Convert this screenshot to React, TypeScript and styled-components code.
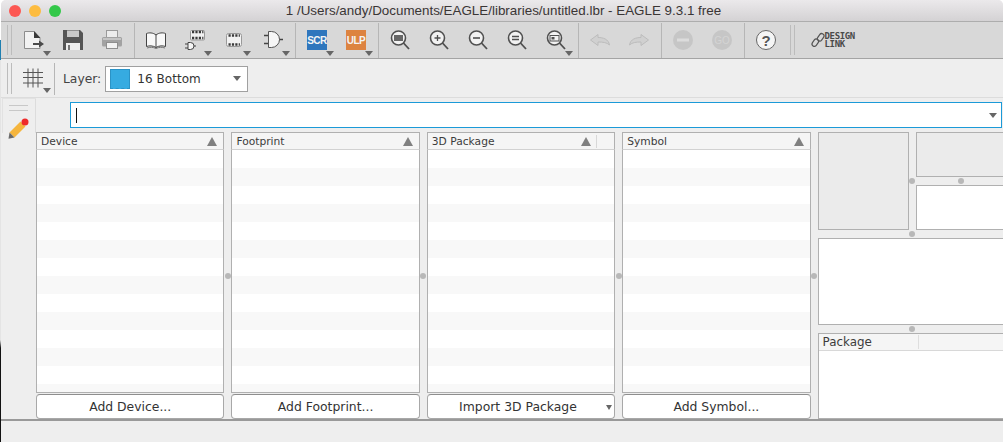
import React from 'react';
import styled, { createGlobalStyle } from 'styled-components';

const UI_FONT = '"DejaVu Sans", "Liberation Sans", sans-serif';

const GlobalStyle = createGlobalStyle`
  html, body {
    margin: 0;
    padding: 0;
    width: 1003px;
    height: 442px;
    overflow: hidden;
    background: linear-gradient(#ffffff 0 40px, #1f7fb0 40px 60px, #e4e4e4 60px 340px, #111111 348px);
  }
  * { box-sizing: border-box; }
`;

const Window = styled.div`
  margin-left: 1px;
  width: 1002px;
  height: 442px;
  display: flex;
  flex-direction: column;
  background: #eeeeee;
  overflow: hidden;
  border-radius: 5px 5px 0 0;
  font-family: ${UI_FONT};
  color: #333;
`;

const TitleBar = styled.div`
  flex: 0 0 22px;
  display: flex;
  align-items: center;
  background: linear-gradient(#ebe9eb, #d4d2d4);
  border-bottom: 1px solid #adadad;
`;

const Lights = styled.div`
  flex: 0 0 69px;
  display: flex;
  gap: 8px;
  padding-left: 8px;
`;

const Light = styled.span<{ $color: string }>`
  width: 12px;
  height: 12px;
  border-radius: 50%;
  background: ${props => props.$color};
`;

const Title = styled.div`
  flex: 1;
  text-align: center;
  font-family: "Liberation Sans", Arial, sans-serif;
  font-size: 13.4px;
  color: #3a3535;
  padding-right: 66px;
  white-space: nowrap;
`;

const MainToolbar = styled.div`
  flex: 0 0 37px;
  display: flex;
  align-items: stretch;
  padding-left: 6px;
  background: #d8d8d8;
  border-bottom: 1px solid #a4a4a4;
`;

const LayerToolbar = styled.div`
  flex: 0 0 39px;
  display: flex;
  align-items: stretch;
  padding: 1px 0 0 6px;
  background: #eeeeee;
  border-bottom: 1px solid #dcdcdc;
`;

const Grip = styled.div<{ $inset?: number }>`
  flex: 0 0 5px;
  margin: 3px 2.5px 3px ${props => props.$inset ?? 0}px;
  border-left: 1px solid #bcbcbc;
  border-right: 1px solid #bcbcbc;
`;

const Separator = styled.div<{ $tight?: boolean }>`
  flex: 0 0 1px;
  margin: ${props => (props.$tight ? '3px 1.5px 2px 0.5px' : '1px 1.5px 0 2.5px')};
  background: #b6b6b6;
`;

const ToolButton = styled.div<{ $menu?: boolean; $caretBottom?: number }>`
  position: relative;
  flex: 0 0 39px;
  display: flex;
  align-items: center;
  justify-content: center;
  &::after {
    content: ${props => (props.$menu ? '""' : 'none')};
    position: absolute;
    right: 3px;
    bottom: ${props => props.$caretBottom ?? 2}px;
    border-left: 4px solid transparent;
    border-right: 4px solid transparent;
    border-top: 5px solid #666;
  }
`;

const Icon = styled.svg`
  display: block;
  width: 24px;
  height: 24px;
  flex: none;
`;

const ScriptBadge = styled.span<{ $color: string }>`
  width: 20px;
  height: 20px;
  display: flex;
  align-items: center;
  justify-content: center;
  background: ${props => props.$color};
  color: #f4f4f4;
  font-family: "Liberation Sans", Arial, sans-serif;
  font-size: 10px;
  font-weight: 700;
  letter-spacing: -0.5px;
`;

const DesignLink = styled.div`
  display: flex;
  align-items: center;
  padding-left: 12px;
`;

const DesignText = styled.span`
  margin-left: -1px;
  font-family: "DejaVu Sans Mono", monospace;
  font-size: 9px;
  font-weight: 700;
  line-height: 8px;
  letter-spacing: -0.35px;
  color: #4a4a4a;
  white-space: pre-line;
`;

const LayerLabel = styled.span`
  align-self: center;
  margin-left: 6.5px;
  font-size: 12.3px;
  color: #444;
`;

const LayerSelect = styled.div`
  align-self: center;
  width: 143px;
  height: 26px;
  margin-left: 4px;
  display: flex;
  align-items: center;
  padding: 0 6px 0 4px;
  background: #fff;
  border: 1px solid #a0a0a0;
`;

const Swatch = styled.span`
  flex: 0 0 20px;
  height: 20px;
  background: #36abe1;
  border: 1px solid #2b93c6;
  border-bottom-style: dashed;
`;

const LayerName = styled.span`
  flex: 1;
  padding-left: 7px;
  font-size: 12px;
  letter-spacing: 0.05px;
`;

const DownCaret = styled.span`
  flex: none;
  border-left: 4px solid transparent;
  border-right: 4px solid transparent;
  border-top: 5px solid #666;
`;

const Body = styled.div`
  flex: 0 0 323px;
  display: flex;
  border-bottom: 2px solid #999;
`;

const SidePanel = styled.div`
  flex: 0 0 34px;
  margin-left: 1px;
  padding: 6px 0 0 7px;
  border-top: 1px solid #e2e2e2;
  background:
    linear-gradient(#dcdcdc, #dcdcdc) right top / 1px 34px no-repeat,
    linear-gradient(#e2e2e2, #e2e2e2) left top / 1px 34px no-repeat;
`;

const SideGrip = styled.div`
  width: 19px;
  height: 6px;
  margin-bottom: 6px;
  border-top: 1px solid #c8c8c8;
  border-bottom: 1px solid #c8c8c8;
`;

const PencilIcon = styled(Icon)`
  margin-left: -3px;
`;

const Content = styled.div`
  flex: 1;
  min-width: 0;
  display: flex;
  flex-direction: column;
  overflow: hidden;
`;

const CommandRow = styled.div`
  flex: 0 0 34px;
  padding: 4px 1px 4px 34px;
`;

const CommandInput = styled.div`
  height: 26px;
  display: flex;
  align-items: center;
  justify-content: space-between;
  padding: 0 4px 0 5px;
  background: #fff;
  border: 1px solid #1b9ad8;
`;

const TextCursor = styled.span`
  width: 1px;
  height: 15px;
  background: #111;
`;

const Panes = styled.div`
  flex: 1;
  display: flex;
  min-height: 0;
`;

const Column = styled.div`
  flex: 0 0 188.4px;
  display: flex;
  flex-direction: column;
`;

const HeaderBar = styled.div`
  flex: 0 0 18px;
  display: flex;
  align-items: center;
  padding-left: 4px;
  background: #f5f5f5;
  border: 1px solid #b0b0b0;
  border-bottom: 1px solid #d2d2d2;
  font-size: 10.7px;
  color: #3c3c3c;
`;

const HeaderLabel = styled.span`
  flex: 1;
`;

const SortArrow = styled.span`
  flex: none;
  margin-right: 6px;
  border-left: 5px solid transparent;
  border-right: 5px solid transparent;
  border-bottom: 9px solid #808080;
`;

const ExtraSection = styled.span`
  flex: 0 0 18px;
  height: 13px;
  margin-left: -1px;
  border-left: 1px solid #d8d8d8;
`;

const StripedList = styled.div`
  flex: 1;
  border: 1px solid #b0b0b0;
  border-top: 0;
  background: repeating-linear-gradient(#fff 0 18px, #f8f8f8 18px 36px);
`;

const ActionButton = styled.div<{ $menu?: boolean }>`
  position: relative;
  flex: 0 0 25px;
  margin-top: 1px;
  display: flex;
  align-items: center;
  justify-content: center;
  padding-right: ${props => (props.$menu ? '6px' : '0')};
  background: #fff;
  border: 1px solid #a8a8a8;
  border-top-color: #8e8e8e;
  border-radius: 4px;
  font-size: 12.4px;
  color: #333;
  &::after {
    content: ${props => (props.$menu ? '""' : 'none')};
    position: absolute;
    right: 2px;
    top: 10px;
    border-left: 3.5px solid transparent;
    border-right: 3.5px solid transparent;
    border-top: 5px solid #666;
  }
`;

const VSplit = styled.div`
  flex: 0 0 7px;
  display: flex;
  align-items: center;
  justify-content: center;
`;

const HSplit = styled.div`
  flex: 0 0 8px;
  display: flex;
  align-items: center;
  justify-content: center;
`;

const Dot = styled.span`
  flex: none;
  width: 6px;
  height: 6px;
  border-radius: 50%;
  background: #b8b8b8;
`;

const Previews = styled.div`
  flex: 0 0 188px;
  display: flex;
  flex-direction: column;
`;

const PreviewTop = styled.div`
  flex: 0 0 98px;
  display: flex;
`;

const PreviewStack = styled.div`
  flex: 1;
  display: flex;
  flex-direction: column;
`;

const PreviewBox = styled.div<{ $blank?: boolean; $grow?: boolean; $width?: number; $height?: number }>`
  flex: ${props =>
    props.$width ? `0 0 ${props.$width}px` : props.$height ? `0 0 ${props.$height}px` : props.$grow ? '1' : 'none'};
  background: ${props => (props.$blank ? '#ffffff' : '#ebebeb')};
  border: 1px solid #b0b0b0;
`;

const PackagePane = styled.div`
  flex: 1;
  min-height: 0;
  display: flex;
  flex-direction: column;
  background: #fff;
  border: 1px solid #b0b0b0;
`;

const PackageHeader = styled.div`
  flex: 0 0 17px;
  display: flex;
  align-items: center;
  background: #f5f5f5;
  border-bottom: 1px solid #d8d8d8;
`;

const PackageLabel = styled.span`
  flex: 0 0 100px;
  padding-left: 4px;
  font-size: 11.9px;
  border-right: 1px solid #dedede;
  color: #3c3c3c;
`;

const NewIcon = () => (
  <Icon viewBox="0 0 24 24">
    <path d="M2.5 3.5H12L18 10V20.5H2.5Z" fill="#f2f2f2" stroke="#8c8c8c" />
    <path d="M12 3L18.5 10H12Z" fill="#3a3a3a" />
    <path d="M11 15H17V12.5L22 16L17 19.5V17H11Z" fill="#4a4a4a" />
  </Icon>
);

const SaveIcon = () => (
  <Icon viewBox="0 0 24 24">
    <path d="M2 2H19L22 5V22H2Z" fill="#555" />
    <rect x="6" y="2.5" width="12" height="6.5" fill="#c8c8c8" />
    <rect x="5" y="15" width="14" height="7" fill="#eeeeee" />
    <rect x="7" y="17" width="2" height="5" fill="#777" />
  </Icon>
);

const PrintIcon = () => (
  <Icon viewBox="0 0 24 24">
    <rect x="6.5" y="2.5" width="11" height="7" fill="#ececec" stroke="#9a9a9a" />
    <rect x="2" y="9" width="20" height="9.5" rx="1.5" fill="#a2a2a2" />
    <rect x="3" y="10" width="18" height="2" fill="#c4c4c4" />
    <rect x="6.5" y="14.5" width="11" height="6" fill="#f2f2f2" stroke="#8e8e8e" />
  </Icon>
);

const BookIcon = () => (
  <Icon viewBox="0 0 24 24">
    <path d="M12 7C9 4.5 5 4.5 2.5 5.5V18.5C5 17.5 9 17.5 12 19.5C15 17.5 19 17.5 21.5 18.5V5.5C19 4.5 15 4.5 12 7Z" fill="#f8f8f8" stroke="#444" />
    <path d="M12 7V20" stroke="#444" fill="none" />
    <path d="M3 20C6 19 9 19 12 20.5C15 19 18 19 21 20" stroke="#777" fill="none" />
  </Icon>
);

const Pads = ({ y, x = 9, n = 4 }: { y: number; x?: number; n?: number }) => (
  <path d={`M${x} ${y}h${n * 3 - 0.6}`} stroke="#3a3a3a" strokeWidth="2.4" strokeDasharray="2.2 1.2" fill="none" />
);

const DeviceIcon = () => (
  <Icon viewBox="0 0 24 24">
    <rect x="7.5" y="2.5" width="14" height="9.5" rx="1" fill="#f2f2f2" stroke="#999" />
    <Pads y={4} />
    <Pads y={10} />
    <path d="M5 14.5H7.5A3.5 3.5 0 0 1 7.5 21.5H5Z" fill="#f6f6f6" stroke="#444" />
    <path d="M2 16H5M2 20H5M11 18H13" stroke="#444" fill="none" />
  </Icon>
);

const PackageIcon = () => (
  <Icon viewBox="0 0 24 24">
    <rect x="4.5" y="5.5" width="15" height="13" rx="2" fill="#f2f2f2" stroke="#999" />
    <Pads y={7.5} x={6.5} />
    <Pads y={16.5} x={6.5} />
  </Icon>
);

const SymbolIcon = () => (
  <Icon viewBox="0 0 24 24">
    <path d="M7.5 3.5H10.5A8 8 0 0 1 10.5 19.5H7.5Z" fill="#f6f6f6" stroke="#555" />
    <path d="M3 7.5H7M3 15.5H7M18.5 11.5H22" stroke="#444" strokeWidth="1.4" fill="none" />
  </Icon>
);

const Lens = ({ children }: { children?: React.ReactNode }) => (
  <Icon viewBox="0 0 24 24">
    <circle cx="10.5" cy="10" r="7" fill="#f2f2f2" stroke="#505050" strokeWidth="1.6" />
    <path d="M15.5 15L21 21" stroke="#505050" strokeWidth="1.8" fill="none" />
    {children}
  </Icon>
);

const UndoIcon = ({ flip }: { flip?: boolean }) => (
  <Icon viewBox="0 0 24 24">
    <path
      d="M2.5 12L10 6.5V9.5C15 9.5 20.5 11 21.5 17C19 14.5 15 14 10 14V17.5Z"
      fill="#d0d0d0"
      stroke="#bcbcbc"
      transform={flip ? 'matrix(-1 0 0 1 24 0)' : undefined}
    />
  </Icon>
);

const DisabledDisc = ({ children }: { children: React.ReactNode }) => (
  <Icon viewBox="0 0 24 24">
    <circle cx="12" cy="12" r="10" fill="#c6c6c6" />
    {children}
  </Icon>
);

const GoText = styled.text`
  font-family: "Liberation Sans", Arial, sans-serif;
  font-size: 10px;
  fill: #d4d4d4;
`;

const HelpText = styled.text`
  font-family: "Liberation Sans", Arial, sans-serif;
  font-size: 15px;
  font-weight: 700;
  fill: #555;
`;

const HelpIcon = () => (
  <Icon viewBox="0 0 24 24">
    <circle cx="12" cy="12" r="9.5" fill="#f5f5f5" stroke="#666" />
    <HelpText x="12" y="17.5" textAnchor="middle">?</HelpText>
  </Icon>
);

const LinkSvg = styled(Icon)`
  width: 16px;
  height: 16px;
`;

const LinkIcon = () => (
  <LinkSvg viewBox="0 0 24 24">
    <g fill="none" stroke="#555" strokeWidth="1.8">
      <rect x="2" y="12.5" width="12" height="7" rx="3.5" transform="rotate(-55 8 16)" />
      <rect x="10" y="4.5" width="12" height="7" rx="3.5" transform="rotate(-55 16 8)" />
    </g>
  </LinkSvg>
);

const GridIcon = () => (
  <Icon viewBox="0 0 24 24">
    <path d="M6 1.5V20.5M11 1.5V20.5M16 1.5V20.5M1 5.5H21M1 10.5H21M1 16H21" stroke="#555" fill="none" />
  </Icon>
);

const Pencil = () => (
  <PencilIcon viewBox="0 0 24 24">
    <path d="M6 18L17 7" stroke="#f5b53d" strokeWidth="7" fill="none" />
    <path d="M2.5 21.7L3.5 15.5L8.5 20.5Z" fill="#6a6a6a" />
    <circle cx="19" cy="5" r="3.5" fill="#ee2a2a" />
  </PencilIcon>
);

const columns = [
  { title: 'Device', action: 'Add Device...' },
  { title: 'Footprint', action: 'Add Footprint...' },
  { title: '3D Package', action: 'Import 3D Package', extra: true },
  { title: 'Symbol', action: 'Add Symbol...' },
];

export default function App() {
  return (
    <Window>
      <GlobalStyle />
      <TitleBar>
        <Lights>
          <Light $color="#fc5753" />
          <Light $color="#fdbc40" />
          <Light $color="#34c84a" />
        </Lights>
        <Title>1 /Users/andy/Documents/EAGLE/libraries/untitled.lbr - EAGLE 9.3.1 free</Title>
      </TitleBar>

      <MainToolbar>
        <Grip />
        <ToolButton $menu><NewIcon /></ToolButton>
        <ToolButton><SaveIcon /></ToolButton>
        <ToolButton><PrintIcon /></ToolButton>
        <Separator />
        <ToolButton><BookIcon /></ToolButton>
        <ToolButton $menu><DeviceIcon /></ToolButton>
        <ToolButton $menu><PackageIcon /></ToolButton>
        <ToolButton $menu><SymbolIcon /></ToolButton>
        <Separator />
        <ToolButton $menu><ScriptBadge $color="#2f76bd">SCR</ScriptBadge></ToolButton>
        <ToolButton $menu><ScriptBadge $color="#dd8340">ULP</ScriptBadge></ToolButton>
        <Separator />
        <ToolButton>
          <Lens><rect x="6" y="7" width="9" height="6" fill="#666" /></Lens>
        </ToolButton>
        <ToolButton>
          <Lens><path d="M7.5 10H13.5M10.5 7V13" stroke="#505050" strokeWidth="1.3" fill="none" /></Lens>
        </ToolButton>
        <ToolButton>
          <Lens><path d="M7 10H14" stroke="#505050" strokeWidth="1.6" fill="none" /></Lens>
        </ToolButton>
        <ToolButton>
          <Lens><path d="M7 8.5H14M7 11.5H14" stroke="#505050" strokeWidth="1.3" fill="none" /></Lens>
        </ToolButton>
        <ToolButton $menu>
          <Lens>
            <rect x="6" y="7.5" width="9" height="5.5" fill="none" stroke="#505050" />
            <rect x="7.5" y="9" width="3" height="2.5" fill="#505050" />
          </Lens>
        </ToolButton>
        <Separator />
        <ToolButton><UndoIcon /></ToolButton>
        <ToolButton><UndoIcon flip /></ToolButton>
        <Separator />
        <ToolButton>
          <DisabledDisc><rect x="6" y="10.5" width="12" height="3" fill="#dcdcdc" /></DisabledDisc>
        </ToolButton>
        <ToolButton>
          <DisabledDisc><GoText x="12" y="15.5" textAnchor="middle">GO</GoText></DisabledDisc>
        </ToolButton>
        <Separator />
        <ToolButton><HelpIcon /></ToolButton>
        <Grip $inset={4.5} />
        <DesignLink>
          <LinkIcon />
          <DesignText>{'DESIGN\nLINK'}</DesignText>
        </DesignLink>
      </MainToolbar>

      <LayerToolbar>
        <Grip />
        <ToolButton $menu $caretBottom={4}><GridIcon /></ToolButton>
        <Separator $tight />
        <LayerLabel>Layer:</LayerLabel>
        <LayerSelect>
          <Swatch />
          <LayerName>16 Bottom</LayerName>
          <DownCaret />
        </LayerSelect>
      </LayerToolbar>

      <Body>
        <SidePanel>
          <SideGrip />
          <Pencil />
        </SidePanel>
        <Content>
          <CommandRow>
            <CommandInput>
              <TextCursor />
              <DownCaret />
            </CommandInput>
          </CommandRow>
          <Panes>
            {columns.map(col => (
              <React.Fragment key={col.title}>
                <Column>
                  <HeaderBar>
                    <HeaderLabel>{col.title}</HeaderLabel>
                    <SortArrow />
                    {col.extra && <ExtraSection />}
                  </HeaderBar>
                  <StripedList />
                  <ActionButton $menu={col.extra}>{col.action}</ActionButton>
                </Column>
                <VSplit><Dot /></VSplit>
              </React.Fragment>
            ))}
            <Previews>
              <PreviewTop>
                <PreviewBox $width={91} />
                <VSplit><Dot /></VSplit>
                <PreviewStack>
                  <PreviewBox $grow />
                  <HSplit><Dot /></HSplit>
                  <PreviewBox $blank $grow />
                </PreviewStack>
              </PreviewTop>
              <HSplit><Dot /></HSplit>
              <PreviewBox $blank $height={87} />
              <HSplit><Dot /></HSplit>
              <PackagePane>
                <PackageHeader>
                  <PackageLabel>Package</PackageLabel>
                </PackageHeader>
              </PackagePane>
            </Previews>
          </Panes>
        </Content>
      </Body>
    </Window>
  );
}
